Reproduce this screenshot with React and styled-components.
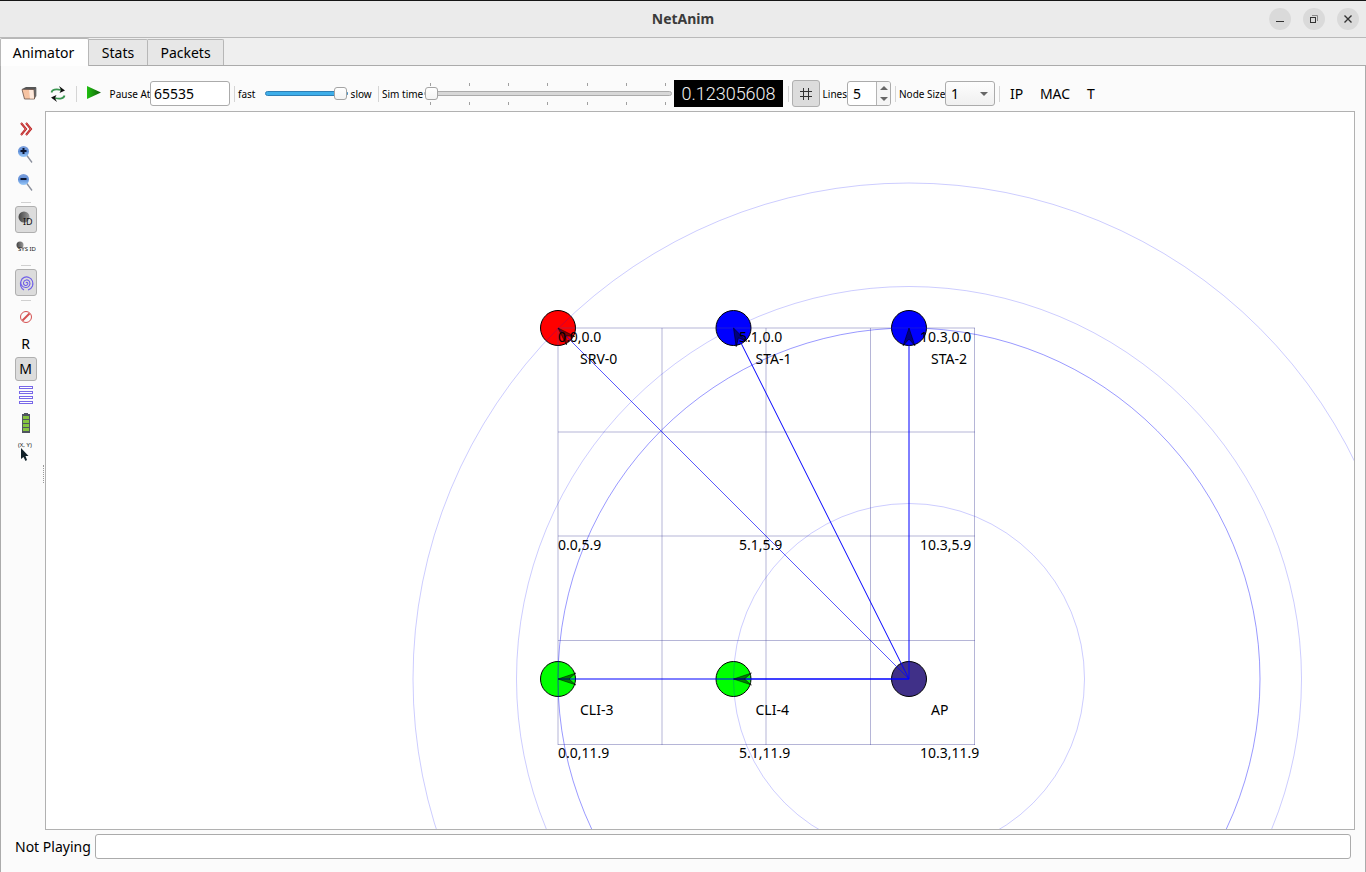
import React from "react";
import styled, { createGlobalStyle, css } from "styled-components";

const Global = createGlobalStyle`
  * { box-sizing: border-box; }
  body { margin: 0; background: #fbfbfb; }
  body, button, input, select {
    font-family: "Noto Sans", "Open Sans", sans-serif;
    font-size: 14px;
    color: #000;
  }
`;

const Window = styled.div`
  min-height: 100vh;
  display: flex;
  flex-direction: column;
  background: #efefef;
`;

const TitleBar = styled.header`
  height: 38px;
  border-top: 1px solid #151515;
  border-bottom: 1px solid #b9b9b9;
  background: #ebebeb;
  display: grid;
  grid-template-columns: 1fr auto 1fr;
  align-items: center;
  padding: 0 7px;
`;

const Title = styled.h1`
  grid-column: 2;
  margin: 0;
  font-size: 14px;
  line-height: 20px;
  font-weight: 700;
  color: #3b3b3b;
`;

const WindowButtons = styled.div`
  display: flex;
  justify-content: flex-end;
  gap: 12px;
`;

const RoundButton = styled.button`
  width: 22px;
  height: 22px;
  padding: 0;
  border: 0;
  border-radius: 50%;
  background: #dadada;
  svg { display: block; }
`;

const Tabs = styled.nav`
  display: flex;
  align-items: flex-end;
  height: 28px;
  border-bottom: 1px solid #ababab;
`;

const Tab = styled.button`
  height: 26px;
  padding: 1px 0 0;
  border: 1px solid #b7b7b7;
  border-left-width: 0;
  border-bottom: 0;
  border-radius: 0 2px 0 0;
  background: #e7e7e7;
  line-height: 20px;
  width: ${(p) => p.$width}px;
  ${(p) =>
    p.$active &&
    css`
      height: 28px;
      padding: 0 2px 0 0;
      margin-bottom: -1px;
      border-left-width: 1px;
      border-radius: 2px 2px 0 0;
      background: #fefefe;
    `}
`;

const Panel = styled.main`
  flex: 1;
  display: flex;
  flex-direction: column;
  border: solid #ababab;
  border-width: 0 1px;
  background: #fbfbfb;
`;

const Toolbar = styled.div`
  display: flex;
  align-items: center;
  height: 45px;
  padding: 10px 0 0 14px;
`;

const Divider = styled.span`
  flex: none;
  width: 1px;
  height: 16px;
  margin: 0 ${(p) => p.$right}px 0 ${(p) => p.$left}px;
  background: #d5d5d5;
`;

const ToolButton = styled.button`
  flex: none;
  width: ${(p) => p.$width}px;
  height: 27px;
  padding: 0;
  display: flex;
  align-items: center;
  justify-content: center;
  line-height: 20px;
  border: 1px solid ${(p) => (p.$pressed ? "#afafaf" : "transparent")};
  border-radius: 3px;
  background: ${(p) => (p.$pressed ? "#dcdcdc" : "transparent")};
`;

const SmallLabel = styled.label`
  flex: none;
  width: ${(p) => p.$width}px;
  font-size: 10px;
  line-height: 16px;
  white-space: nowrap;
`;

const field = css`
  border: 1px solid #ababab;
  border-radius: 3px;
  background: #fff;
  outline: none;
`;

const PauseInput = styled.input`
  ${field}
  width: 80px;
  height: 25px;
  padding: 0 3px;
`;

const Slider = styled.input.attrs({ type: "range" })`
  appearance: none;
  flex: none;
  width: ${(p) => p.$width}px;
  height: 14px;
  margin: 0;
  background: transparent;
  &::-webkit-slider-runnable-track {
    height: 5px;
    border: 1px solid ${(p) => (p.$filled ? "#2f7fb5" : "#ababab")};
    border-radius: 3px;
    background: ${(p) => (p.$filled ? "#3daee9" : "#d8d8d8")};
  }
  &::-webkit-slider-thumb {
    appearance: none;
    width: 13px;
    height: 13px;
    margin-top: -5px;
    border: 1px solid #a4a4a4;
    border-radius: 3px;
    background: linear-gradient(#fff, #f4f4f4);
  }
`;

const TickedSlider = styled.div`
  flex: none;
  display: flex;
  flex-direction: column;
  gap: 1px;
  width: 248px;
`;

const Ticks = styled.div`
  display: flex;
  justify-content: space-between;
  padding: 0 6px;
  i { width: 1px; height: 3px; background: #a0a0a0; }
`;

const Lcd = styled.output`
  flex: none;
  width: 109px;
  height: 27px;
  margin-left: 2px;
  background: #000;
  color: #f2f2f2;
  font: 300 18px/27px Roboto, "Liberation Sans", sans-serif;
  text-align: center;
`;

const Spin = styled.div`
  ${field}
  display: flex;
  width: 44px;
  height: 25px;
  overflow: hidden;
`;

const SpinInput = styled.input`
  width: 29px;
  padding: 0 5px;
  border: 0;
  border-right: 1px solid #b4b4b4;
  background: transparent;
  outline: none;
  appearance: textfield;
  &::-webkit-inner-spin-button { appearance: none; margin: 0; }
`;

const SpinArrows = styled.div`
  flex: 1;
  display: flex;
  flex-direction: column;
  background: #f5f5f5;
  button {
    flex: 1;
    padding: 0;
    border: 0;
    background: none;
    display: flex;
    align-items: center;
    justify-content: center;
  }
`;

const SelectBox = styled.div`
  display: grid;
  align-items: center;
  width: 50px;
  > * { grid-area: 1 / 1; }
  svg { justify-self: end; margin-right: 7px; pointer-events: none; }
`;

const Select = styled.select`
  ${field}
  appearance: none;
  width: 100%;
  height: 25px;
  padding: 0 5px;
  background: linear-gradient(#fdfdfd, #f0f0f0);
`;

const Body = styled.div`
  flex: 1;
  display: flex;
  padding-right: 10px;
`;

const Side = styled.aside`
  width: 44px;
  flex: none;
  display: flex;
  flex-direction: column;
  align-items: center;
  padding: 4px 0 0 5px;
`;

const SideButton = styled(ToolButton)`
  width: 22px;
  height: ${(p) => p.$height}px;
  svg { flex: none; }
`;

const SideDivider = styled.div`
  width: 10px;
  height: 8px;
  display: flex;
  align-items: center;
  &::before { content: ""; width: 100%; height: 1px; background: #d0d0d0; }
`;

const Grip = styled.div`
  align-self: flex-end;
  width: 2px;
  height: 18px;
  border-left: 1px dotted #999;
`;

const Scene = styled.section`
  flex: 1;
  min-width: 0;
  border: 1px solid #b1b1b1;
  background: #fff;
  display: flex;
  svg { width: 100%; height: auto; min-height: 0; display: block; }
  text { font-size: 14px; fill: #000; }
`;

const Status = styled.footer`
  display: flex;
  align-items: center;
  height: 42px;
  padding: 0 14px 9px;
  label { flex: none; width: 80px; line-height: 20px; white-space: nowrap; }
`;

const StatusInput = styled.input`
  ${field}
  flex: 1;
  min-width: 0;
  height: 25px;
  padding: 0 4px;
`;

const gridX = [558, 662, 766, 870.5, 974.5];
const gridY = [328, 432, 536, 640.5, 744.5];

const coords = [
  [558, 342, "0.0,0.0"], [739, 342, "5.1,0.0"], [920, 342, "10.3,0.0"],
  [558, 550, "0.0,5.9"], [739, 550, "5.1,5.9"], [920, 550, "10.3,5.9"],
  [558, 758, "0.0,11.9"], [739, 758, "5.1,11.9"], [920, 758, "10.3,11.9"],
];

const nodes = [
  { x: 558, y: 328, fill: "#ff0000", name: "SRV-0" },
  { x: 733.5, y: 328, fill: "#0000ff", name: "STA-1" },
  { x: 909, y: 328, fill: "#0000ff", name: "STA-2" },
  { x: 558, y: 679, fill: "#00ff00", name: "CLI-3" },
  { x: 733.5, y: 679, fill: "#00ff00", name: "CLI-4" },
  { x: 909, y: 679, fill: "#403088", name: "AP" },
];

const links = [
  { x: 558, y: 328, angle: 45, opacity: 0.65 },
  { x: 733.5, y: 328, angle: 63.4, opacity: 1 },
  { x: 909, y: 328, angle: 90, opacity: 1 },
  { x: 558, y: 679, angle: 0, opacity: 1 },
  { x: 733.5, y: 679, angle: 0, opacity: 1 },
];

const rings = [
  [175.5, 0.2], [351, 0.4], [392.5, 0.2], [496, 0.2],
];

function Topology() {
  return (
    <svg viewBox="46 112 1308 717" preserveAspectRatio="xMidYMid slice" role="img" aria-label="Network topology">
      {nodes.map((n) => (
        <circle key={n.name} cx={n.x} cy={n.y} r="17.5" fill={n.fill} stroke="#000" />
      ))}
      <g stroke="#46469c" strokeOpacity="0.4">
        {gridX.map((x) => <line key={x} x1={x} x2={x} y1="328" y2="745" />)}
        {gridY.map((y) => <line key={y} y1={y} y2={y} x1="558" x2="975" />)}
      </g>
      {rings.map(([r, o]) => (
        <circle key={r} cx="909" cy="679" r={r} fill="none" stroke="#00f" strokeOpacity={o} />
      ))}
      {links.map((l) => (
        <g key={`${l.x}-${l.y}`}>
          <line x1="909" y1="679" x2={l.x} y2={l.y} stroke="#00f" strokeOpacity={l.opacity} />
          <path
            d="M0 0L18 -6L11 0L18 6Z"
            transform={`translate(${l.x} ${l.y}) rotate(${l.angle})`}
            fill="#000" fillOpacity="0.5" stroke="#000" strokeOpacity="0.6" strokeWidth="0.8"
          />
        </g>
      ))}
      {nodes.map((n) => (
        <text key={n.name} x={n.x + 22} y={n.y + 36}>{n.name}</text>
      ))}
      {coords.map(([x, y, t]) => <text key={t} x={x} y={y}>{t}</text>)}
    </svg>
  );
}

const Arrow = ({ up }) => (
  <svg width="8" height="4" viewBox="0 0 8 4"><path d={up ? "M0 4L4 0L8 4Z" : "M0 0L4 4L8 0Z"} fill="#666" /></svg>
);

const Magnifier = ({ plus }) => (
  <svg width="16" height="20" viewBox="0 0 16 20">
    <defs>
      <linearGradient id="lens" x2="0" y2="1"><stop stopColor="#7d9fdc" /><stop offset=".5" stopColor="#5f8fd8" /><stop offset="1" stopColor="#9ccbfa" /></linearGradient>
    </defs>
    <path d="M8.500 10L14 17.500" stroke="#8a8f9c" strokeWidth="1.3" />
    <circle cx="5.500" cy="6.500" r="5.500" fill="url(#lens)" />
    <path d={plus ? "M2.500 6H8.500M5.500 3V9" : "M2.500 6H8.500"} stroke="#0b1530" strokeWidth="2" />
  </svg>
);

export default function App() {
  return (
    <>
      <Global />
      <Window>
        <TitleBar>
          <Title>NetAnim</Title>
          <WindowButtons>
            <RoundButton aria-label="Minimize">
              <svg width="22" height="22"><path d="M7 13.500H15" stroke="#333" /></svg>
            </RoundButton>
            <RoundButton aria-label="Restore">
              <svg width="22" height="22" fill="none">
                <path d="M9 7.500H14.500V13" stroke="#8a8a8a" />
                <rect x="7.500" y="9.500" width="5" height="5" stroke="#333" />
              </svg>
            </RoundButton>
            <RoundButton aria-label="Close">
              <svg width="22" height="22"><path d="M7.500 7.500L14.500 14.500M14.500 7.500L7.500 14.500" stroke="#333" strokeWidth="1.400" /></svg>
            </RoundButton>
          </WindowButtons>
        </TitleBar>

        <Tabs>
          <Tab $active $width={89}>Animator</Tab>
          <Tab $width={59}>Stats</Tab>
          <Tab $width={76}>Packets</Tab>
        </Tabs>

        <Panel>
          <Toolbar>
            <ToolButton $width={28} aria-label="Open">
              <svg width="16" height="16" viewBox="0 0 16 16">
                <path d="M1 3L5 1H15L14 4Z" fill="#555" />
                <path d="M13 3L15 1.500V10L13 13Z" fill="#777" stroke="#444" strokeWidth=".6" />
                <path d="M1 3.500H12.500L13.500 13H3.500Z" fill="#f6c3a2" stroke="#665048" strokeWidth=".8" />
                <path d="M8 4H12.500L13 12.500H9Z" fill="#fde9dc" />
              </svg>
            </ToolButton>
            <ToolButton $width={30} aria-label="Reload">
              <svg width="16" height="18" viewBox="0 0 16 18" fill="none">
                <path d="M1.500 7.500C2 4.500 6 3.800 11 5" stroke="#3a9550" strokeWidth="1.700" />
                <path d="M9 1L15 5.500L9.500 8L11 5Z" fill="#111" />
                <path d="M14.500 10.500C14 13.500 10 14.200 5 13" stroke="#3a9550" strokeWidth="1.700" />
                <path d="M7 17L1 12.500L6.500 10L5 13Z" fill="#111" />
              </svg>
            </ToolButton>
            <Divider $left={3} $right={4} />
            <ToolButton $width={26} aria-label="Play">
              <svg width="14" height="18" viewBox="0 0 14 18">
                <defs><linearGradient id="play" x2="1"><stop stopColor="#20c010" /><stop offset="1" stopColor="#115c0a" /></linearGradient></defs>
                <path d="M0 1L14 7.500L0 14Z" fill="url(#play)" />
              </svg>
            </ToolButton>
            <SmallLabel $width={43} htmlFor="pause">&nbsp;Pause At</SmallLabel>
            <PauseInput id="pause" defaultValue="65535" />
            <Divider $left={4} $right={3} />
            <SmallLabel $width={27} htmlFor="speed">fast</SmallLabel>
            <Slider id="speed" $width={83} $filled defaultValue="100" />
            <SmallLabel $width={28} htmlFor="speed">&nbsp;slow</SmallLabel>
            <Divider $left={2} $right={3} />
            <SmallLabel $width={42} htmlFor="time">Sim time</SmallLabel>
            <TickedSlider>
              <Ticks>{[0, 1, 2, 3, 4, 5, 6].map((i) => <i key={i} />)}</Ticks>
              <Slider id="time" $width={248} defaultValue="0" />
              <Ticks>{[0, 1, 2, 3, 4, 5, 6].map((i) => <i key={i} />)}</Ticks>
            </TickedSlider>
            <Lcd>0.12305608</Lcd>
            <Divider $left={5} $right={3} />
            <ToolButton $width={28} $pressed aria-label="Grid">
              <svg width="12" height="12" fill="none" stroke="#333"><path d="M3.500 0V12M8.500 0V12M0 3.500H12M0 8.500H12" /></svg>
            </ToolButton>
            <SmallLabel $width={27} htmlFor="lines">&nbsp;Lines</SmallLabel>
            <Spin>
              <SpinInput id="lines" type="number" defaultValue="5" />
              <SpinArrows>
                <button aria-label="Increase"><Arrow up /></button>
                <button aria-label="Decrease"><Arrow /></button>
              </SpinArrows>
            </Spin>
            <Divider $left={4} $right={3} />
            <SmallLabel $width={46} htmlFor="size">Node Size</SmallLabel>
            <SelectBox>
              <Select id="size"><option>1</option></Select>
              <Arrow />
            </SelectBox>
            <Divider $left={4} $right={3} />
            <ToolButton $width={27}>IP</ToolButton>
            <ToolButton $width={50}>MAC</ToolButton>
            <ToolButton $width={22}>T</ToolButton>
          </Toolbar>

          <Body>
            <Side>
              <SideButton $height={27} aria-label="Expand">
                <svg width="14" height="16" fill="none" stroke="#b81414" strokeWidth="2">
                  <path d="M2 2L7 8L2 14M7 2L12 8L7 14" />
                  <path d="M2 2L7 8L2 14M7 2L12 8L7 14" stroke="#f0b0b0" strokeWidth=".5" />
                </svg>
              </SideButton>
              <SideButton $height={26} aria-label="Zoom in"><Magnifier plus /></SideButton>
              <SideButton $height={30} aria-label="Zoom out"><Magnifier /></SideButton>
              <SideDivider />
              <SideButton $height={27} $pressed aria-label="Node id">
                <svg width="16" height="18">
                  <defs><linearGradient id="ball"><stop stopColor="#444" /><stop offset="1" stopColor="#999" /></linearGradient></defs>
                  <circle cx="6" cy="6" r="5.500" fill="url(#ball)" />
                  <text x="5" y="14" fontSize="9" fill="#111">ID</text>
                </svg>
              </SideButton>
              <SideButton $height={28} aria-label="System id">
                <svg width="20" height="14">
                  <circle cx="4" cy="5" r="3.500" fill="url(#ball)" />
                  <text x="2" y="11" fontSize="6" fill="#111">SYS ID</text>
                </svg>
              </SideButton>
              <SideDivider />
              <SideButton $height={27} $pressed aria-label="Wireless circles">
                <svg width="16" height="16" fill="none" stroke="#6f5fe8" strokeWidth="1.100">
                  <path d="M8 8C9 6.500 10.500 8 9.500 9.500C8 11.500 5 10 5.500 7.500C6 4.500 10 4 11.500 6.500C13 9.500 10.500 13 7.500 12.500C4 12 2 9 3 6C4 2.500 8 1 11 2.500C14.500 4 15.500 8 14.500 11C13.500 13.500 12 14.500 10 15M3 6C1.500 9 2.500 13 6 15" />
                </svg>
              </SideButton>
              <SideDivider />
              <SideButton $height={26} aria-label="Block packets">
                <svg width="14" height="14" fill="none" stroke="#d55050"><circle cx="7" cy="7" r="5.500" /><path d="M3.500 10.500L10.500 3.500" strokeWidth="2" /></svg>
              </SideButton>
              <SideButton $height={27}>R</SideButton>
              <SideButton $height={24} $pressed>M</SideButton>
              <SideButton $height={28} aria-label="Packet list">
                <svg width="14" height="18" fill="#fff" stroke="#7868e8">
                  {[0, 5, 10, 15].map((y) => <rect key={y} x=".5" y={y + 0.5} width="13" height="2" />)}
                </svg>
              </SideButton>
              <SideButton $height={28} aria-label="Battery">
                <svg width="10" height="20">
                  <path d="M3 0H7V1H9V20H1V1H3Z" fill="#505560" />
                  <path d="M2 3H8V6H2ZM2 7H8V10H2ZM2 11H8V14H2ZM2 15H8V18H2Z" fill="#86c440" />
                </svg>
              </SideButton>
              <SideButton $height={28} aria-label="Pointer position">
                <svg width="18" height="22">
                  <text x="1" y="7" fontSize="6" fill="#222">(X, Y)</text>
                  <path d="M4 8V19L6.500 17L8.500 21L10 20L8.500 16H11.500Z" fill="#102028" />
                </svg>
              </SideButton>
              <Grip />
            </Side>
            <Scene><Topology /></Scene>
          </Body>

          <Status>
            <label htmlFor="status">Not Playing</label>
            <StatusInput id="status" readOnly />
          </Status>
        </Panel>
      </Window>
    </>
  );
}
